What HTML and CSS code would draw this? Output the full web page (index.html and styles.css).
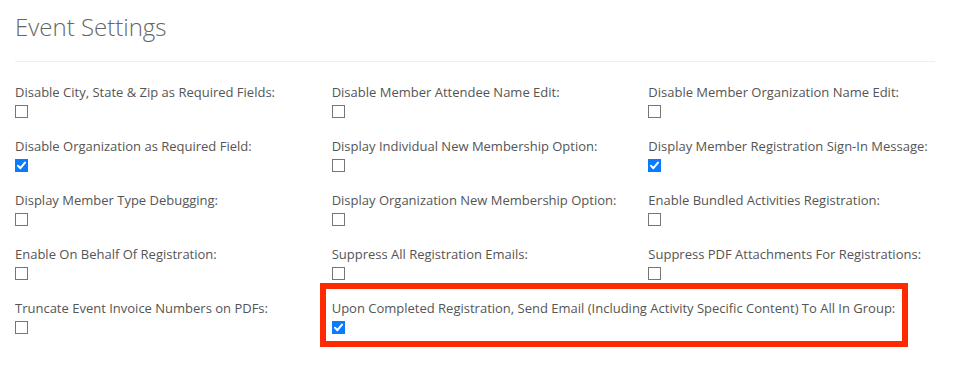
FILE: index.html
```html
<!DOCTYPE html>
<html lang="en">
<head>
    <meta charset="UTF-8">
    <meta name="viewport" content="width=device-width, initial-scale=1.0">
    <title>Event Settings</title>
    <link rel="stylesheet" href="styles.css">
</head>

<body>
    <div class="page">
        <h2 class="page-title">Event Settings</h2>
        <hr class="divider">

        <form class="settings-grid">
            <div class="field">
                <label for="s1">Disable City, State &amp; Zip as Required Fields:</label>
                <input type="checkbox" id="s1">
            </div>
            <div class="field">
                <label for="s2">Disable Member Attendee Name Edit:</label>
                <input type="checkbox" id="s2">
            </div>
            <div class="field">
                <label for="s3">Disable Member Organization Name Edit:</label>
                <input type="checkbox" id="s3">
            </div>

            <div class="field">
                <label for="s4">Disable Organization as Required Field:</label>
                <input type="checkbox" id="s4" checked>
            </div>
            <div class="field">
                <label for="s5">Display Individual New Membership Option:</label>
                <input type="checkbox" id="s5">
            </div>
            <div class="field">
                <label for="s6">Display Member Registration Sign-In Message:</label>
                <input type="checkbox" id="s6" checked>
            </div>

            <div class="field">
                <label for="s7">Display Member Type Debugging:</label>
                <input type="checkbox" id="s7">
            </div>
            <div class="field">
                <label for="s8">Display Organization New Membership Option:</label>
                <input type="checkbox" id="s8">
            </div>
            <div class="field">
                <label for="s9">Enable Bundled Activities Registration:</label>
                <input type="checkbox" id="s9">
            </div>

            <div class="field">
                <label for="s10">Enable On Behalf Of Registration:</label>
                <input type="checkbox" id="s10">
            </div>
            <div class="field">
                <label for="s11">Suppress All Registration Emails:</label>
                <input type="checkbox" id="s11">
            </div>
            <div class="field">
                <label for="s12">Suppress PDF Attachments For Registrations:</label>
                <input type="checkbox" id="s12">
            </div>

            <div class="field">
                <label for="s13">Truncate Event Invoice Numbers on PDFs:</label>
                <input type="checkbox" id="s13">
            </div>
            <div class="field field-wide highlight">
                <label for="s14">Upon Completed Registration, Send Email (Including Activity Specific Content) To All In Group:</label>
                <input type="checkbox" id="s14" checked>
            </div>
        </form>
    </div>
</body>
</html>
```

FILE: styles.css
```css
*, *::before, *::after {
    margin: 0;
    padding: 0;
    box-sizing: border-box;
}

html, body {
    min-height: 100%;
}

body {
    font-family: 'Open Sans', 'Liberation Sans', sans-serif;
    background-color: #ffffff;
    color: #555555;
}

.page {
    width: 950px;
    padding: 14px 15px 40px;
}

.page-title {
    font-size: 24px;
    font-weight: 300;
    line-height: 26px;
    color: #666666;
    margin-bottom: 21px;
}

.divider {
    border: none;
    border-top: 1px solid #eeeeee;
    margin-bottom: 20px;
}

/* Settings */
.settings-grid {
    display: grid;
    grid-template-columns: repeat(3, 1fr);
    column-gap: 30px;
    row-gap: 18px;
}

.field label {
    display: block;
    font-size: 13px;
    line-height: 20px;
    color: #555555;
}

.field input[type="checkbox"] {
    -webkit-appearance: none;
    appearance: none;
    display: block;
    width: 13px;
    height: 13px;
    margin: 3px 0 0 0;
    border: 1px solid #767676;
    background-color: #ffffff;
}

.field input[type="checkbox"]:checked {
    border-color: #0a7aff;
    background-color: #0a7aff;
    background-image: url("data:image/svg+xml,%3Csvg xmlns='http://www.w3.org/2000/svg' viewBox='0 0 13 13'%3E%3Cpath d='M3 6.8 L5.4 9.2 L10 3.6' fill='none' stroke='%23ffffff' stroke-width='2' stroke-linecap='round' stroke-linejoin='round'/%3E%3C/svg%3E");
    background-size: 13px 13px;
    background-position: center;
}

.field-wide {
    grid-column: span 2;
}

.highlight {
    position: relative;
}

.highlight::after {
    content: '';
    position: absolute;
    top: -15px;
    left: -12px;
    width: 588px;
    height: 64px;
    border: 6px solid #ff2a00;
    pointer-events: none;
}
```
